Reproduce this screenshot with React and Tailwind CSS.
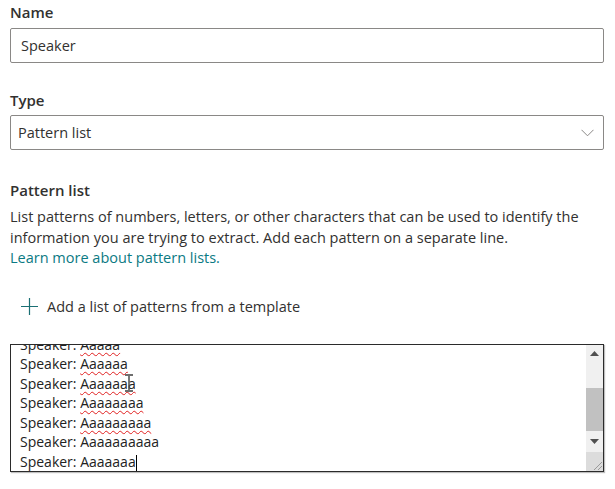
import React from 'react'

const lines = [
  { word: 'Aaaaa', wavy: true },
  { word: 'Aaaaaa', wavy: true },
  { word: 'Aaaaaaa', wavy: true, pointer: true },
  { word: 'Aaaaaaaa', wavy: true },
  { word: 'Aaaaaaaaa', wavy: true },
  { word: 'Aaaaaaaaaa', wavy: false },
  { word: 'Aaaaaaa', wavy: false, caret: true },
]

const Label = ({ children, className = '' }) => (
  <div className={`text-[15px] leading-[20px] font-semibold text-[#323130] ${className}`}>{children}</div>
)

const Scrollbar = () => (
  <div className="w-[17px] flex flex-col bg-[#f0f0f0]">
    {/* up arrow */}
    <div className="h-[18px] flex items-center justify-center">
      <svg width="9" height="5" viewBox="0 0 9 5"><path d="M0 5 L4.5 0 L9 5 Z" fill="#505050" /></svg>
    </div>
    <div className="h-[25px]" />
    {/* thumb */}
    <div className="h-[43px] bg-[#c1c1c1]" />
    <div className="flex-1 flex items-center justify-center">
      <svg width="9" height="5" viewBox="0 0 9 5"><path d="M0 0 L4.5 5 L9 0 Z" fill="#505050" /></svg>
    </div>
    {/* resize corner */}
    <div className="h-[19px] bg-[#dcdcdc] relative">
      <svg className="absolute right-0 bottom-0" width="12" height="12" viewBox="0 0 12 12">
        <path d="M11 3 L3 11 M11 7 L7 11" stroke="#9a9a9a" strokeWidth="1" />
      </svg>
    </div>
  </div>
)

export default function App() {
  return (
    <div className="w-[615px] h-[489px] bg-white overflow-hidden font-['Open_Sans',sans-serif] text-[#323130]">
      <div className="pl-[10px] pr-[11px] pt-[2px] flex flex-col">
        <Label>Name</Label>
        <div className="mt-[6px] h-[35px] border border-[#8a8886] rounded-[2px] flex items-center px-[10px] text-[14.5px]">
          Speaker
        </div>

        <Label className="mt-[27px]">Type</Label>
        <div className="mt-[5px] h-[35px] border border-[#8a8886] rounded-[2px] flex items-center justify-between pl-[7px] pr-[9px] text-[14.5px]">
          <span>Pattern list</span>
          <svg width="13" height="8" viewBox="0 0 13 8" fill="none">
            <path d="M0.5 0.8 L6.5 6.8 L12.5 0.8" stroke="#8a8886" strokeWidth="1" />
          </svg>
        </div>

        <Label className="mt-[30px]">Pattern list</Label>
        <div className="mt-[7px] text-[14.5px] leading-[20.5px]">
          <p>
            List patterns of numbers, letters, or other characters that can be used to identify the information you are
            trying to extract. Add each pattern on a separate line.
          </p>
          <a className="text-[#0b7a83]">Learn more about pattern lists.</a>
        </div>

        <div className="mt-[22px] h-[32px] flex items-center gap-[9px] pl-[11px] text-[14.5px]">
          <svg width="17" height="17" viewBox="0 0 17 17" fill="none">
            <path d="M8.5 0 V17 M0 8.5 H17" stroke="#1b6f74" strokeWidth="1.2" />
          </svg>
          <span>Add a list of patterns from a template</span>
        </div>

        <div className="mt-[21px] h-[128px] border border-[#2b2b2b] flex overflow-hidden shadow-[1px_1px_1px_rgba(0,0,0,0.25)]">
          <div className="flex-1 overflow-hidden relative">
            <div className="mt-[-10px] pl-[9px] text-[14px] leading-[19.5px] text-[#222]">
              {lines.map((l, i) => (
                <div key={i} className="relative whitespace-nowrap">
                  Speaker:{' '}
                  <span className={l.wavy ? 'underline decoration-wavy decoration-[#e02020] decoration-[1px] underline-offset-[2px]' : ''}>
                    {l.word}
                  </span>
                  {l.caret && <span className="inline-block w-[1px] h-[16px] bg-black align-middle" />}
                </div>
              ))}
            </div>
            {/* mouse I-beam */}
            <svg className="absolute left-[113px] top-[29px]" width="10" height="18" viewBox="0 0 10 18" fill="none">
              <path d="M1 1 H9 M5 1 V17 M1 17 H9" stroke="#111" strokeWidth="1.4" />
              <path d="M1 1 H9 M5 1 V17 M1 17 H9" stroke="#fff" strokeWidth="0.4" />
            </svg>
          </div>
          <Scrollbar />
        </div>
      </div>
    </div>
  )
}
